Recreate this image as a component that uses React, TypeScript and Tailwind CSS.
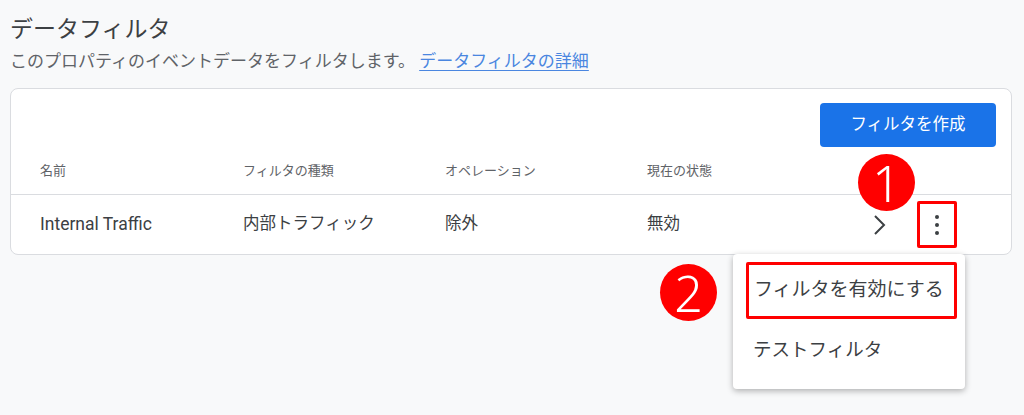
import React from "react";

const jp = "font-['Roboto','Noto_Sans_CJK_JP',sans-serif]";

const columns = ["名前", "フィルタの種類", "オペレーション", "現在の状態"];
const row = ["Internal Traffic", "内部トラフィック", "除外", "無効"];
const colWidths = ["w-[203px]", "w-[202px]", "w-[202px]", "w-[202px]"];

const Badge: React.FC<{ n: string; className: string }> = ({ n, className }) => (
  <div
    className={`absolute flex h-[57px] w-[57px] items-center justify-center rounded-full bg-[#ff0000] text-[50px] leading-none font-light text-white font-['Noto_Sans',sans-serif] ${className}`}
  >
    <span>{n}</span>
  </div>
);

export default function App() {
  return (
    <div className={`relative h-[415px] w-[1024px] overflow-hidden bg-[#f8f9fa] ${jp}`}>
      <div className="pl-[10px] pr-[12px]">
        <h1 className="pt-[14px] text-[23px] leading-[32px] text-[#3c4043]">
          データフィルタ
        </h1>
        <p className="mt-[3px] text-[17px] leading-[24px] text-[#5f6368]">
          このプロパティのイベントデータをフィルタします。{" "}
          <a href="#" className="text-[#4a86e0] underline underline-offset-[3px]">
            データフィルタの詳細
          </a>
        </p>

        <div className="mt-[15px] rounded-[8px] border border-[#dadce0] bg-white">
          <div className="flex justify-end pr-[15px] pt-[14px]">
            <button className="h-[44px] w-[176px] rounded-[4px] bg-[#1a73e8] text-[16.5px] text-white">
              フィルタを作成
            </button>
          </div>
          <div className="flex h-[48px] items-center border-b border-[#dadce0] pl-[29px] text-[13px] text-[#5f6368]">
            {columns.map((c, i) => (
              <div key={c} className={colWidths[i]}>
                {c}
              </div>
            ))}
          </div>
          <div className="flex h-[59px] items-center pl-[29px] text-[16.5px] text-[#3c4043]">
            {row.map((c, i) => (
              <div key={c} className={`${colWidths[i]} ${i === 0 ? "text-[17.5px]" : ""}`}>
                {c}
              </div>
            ))}
            <div className="flex flex-1 items-center justify-end pr-[54px]">
              <svg width="14" height="22" viewBox="0 0 14 22" className="mr-[31px]">
                <path d="M3 2l9 9-9 9" fill="none" stroke="#3c4043" strokeWidth="2" />
              </svg>
              <button className="flex h-[47px] w-[40px] flex-col items-center justify-center gap-[4px] rounded-[2px] border-[3px] border-[#ff0000]">
                <span className="h-[4px] w-[4px] rounded-full bg-[#3c4043]" />
                <span className="h-[4px] w-[4px] rounded-full bg-[#3c4043]" />
                <span className="h-[4px] w-[4px] rounded-full bg-[#3c4043]" />
              </button>
            </div>
          </div>
        </div>
      </div>

      {/* dropdown menu */}
      <div className="absolute left-[733px] top-[254px] w-[232px] rounded-[4px] bg-white pt-[8px] pb-[8px] shadow-[0_2px_6px_rgba(0,0,0,0.3)]">
        <div className="ml-[13px] mr-[8px] flex h-[57px] items-center rounded-[2px] border-[3px] border-[#ff0000] pl-[5px] text-[19px] text-[#3c4043]">
          フィルタを有効にする
        </div>
        <div className="flex h-[62px] items-center pl-[20px] pt-[2px] text-[18.5px] text-[#3c4043]">
          テストフィルタ
        </div>
      </div>

      <Badge n="1" className="left-[858px] top-[154px]" />
      <Badge n="2" className="left-[660px] top-[264px]" />
    </div>
  );
}
